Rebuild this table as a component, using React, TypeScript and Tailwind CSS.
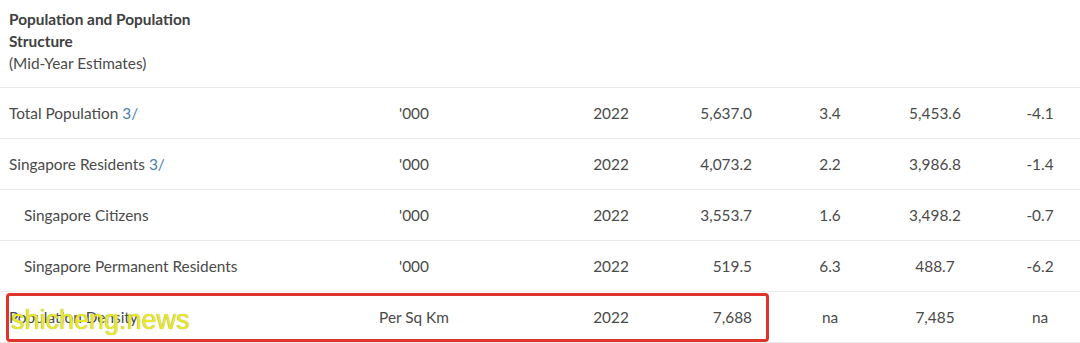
import React from 'react';

type Row = {
  label: string;
  note?: string;
  indent?: boolean;
  unit: string;
  year: string;
  value: string;
  change: string;
  prev: string;
  prevChange: string;
};

const rows: Row[] = [
  { label: 'Total Population', note: '3/', unit: "'000", year: '2022', value: '5,637.0', change: '3.4', prev: '5,453.6', prevChange: '-4.1' },
  { label: 'Singapore Residents', note: '3/', unit: "'000", year: '2022', value: '4,073.2', change: '2.2', prev: '3,986.8', prevChange: '-1.4' },
  { label: 'Singapore Citizens', indent: true, unit: "'000", year: '2022', value: '3,553.7', change: '1.6', prev: '3,498.2', prevChange: '-0.7' },
  { label: 'Singapore Permanent Residents', indent: true, unit: "'000", year: '2022', value: '519.5', change: '6.3', prev: '488.7', prevChange: '-6.2' },
  { label: 'Population Density', unit: 'Per Sq Km', year: '2022', value: '7,688', change: 'na', prev: '7,485', prevChange: 'na' },
];

export default function App() {
  return (
    <div
      className="relative w-[1080px] h-[343px] overflow-hidden bg-white text-[#4a4a4a] text-[15.4px]"
      style={{ fontFamily: 'Lato, "Open Sans", sans-serif' }}
    >
      {/* Section heading */}
      <div className="h-[88px] pt-[8px] pl-[9px] leading-[22px] border-b border-[#ebebeb]">
        <div className="font-bold text-[#404040]">Population and Population</div>
        <div className="font-bold text-[#404040]">Structure</div>
        <div>(Mid-Year Estimates)</div>
      </div>

      {rows.map((r) => (
        <div
          key={r.label}
          className="grid grid-cols-[340px_148px_194px_84px_128px_82px_104px] h-[51px] pt-[2px] items-center border-b border-[#ebebeb]"
        >
          <div className={r.indent ? 'pl-[24px]' : 'pl-[9px]'}>
            {r.label}
            {r.note && <span className="text-[#4a7fb0]"> {r.note}</span>}
          </div>
          <div className="text-center">{r.unit}</div>
          <div className="text-center pl-[52px]">{r.year}</div>
          <div className="text-right pr-[14px]">{r.value}</div>
          <div className="text-center">{r.change}</div>
          <div className="text-center">{r.prev}</div>
          <div className="text-center pl-[24px]">{r.prevChange}</div>
        </div>
      ))}

      {/* highlight box */}
      <div className="absolute left-[6px] top-[293px] w-[763px] h-[49px] border-[3px] border-[#e0332b] rounded-[4px]" />

      {/* watermark */}
      <div
        className="absolute left-[11px] top-[302px] text-[27px] leading-[36px] text-[#e8e82a]"
        style={{ fontFamily: '"Liberation Sans", sans-serif', textShadow: '0 0 1px #9a9a40' }}
      >
        shicheng.news
      </div>
    </div>
  );
}
